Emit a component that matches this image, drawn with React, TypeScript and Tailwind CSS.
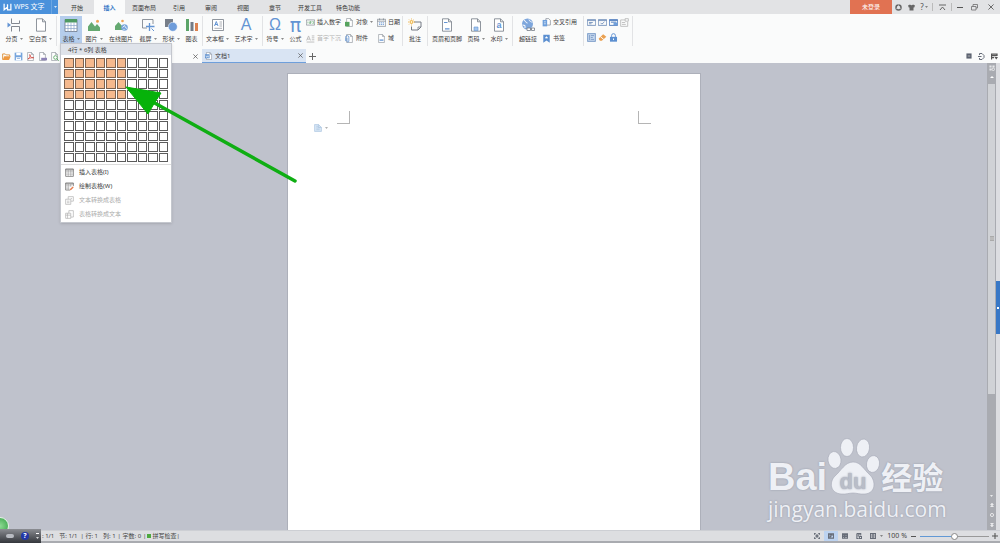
import { useState } from "react";
import type { ReactNode } from "react";
import clsx from "clsx";

const BLUE = "#6394d3";
const INK = "#747b85";

type IconProps = { children: ReactNode; className?: string };

function Glyph({ children, className = "size-[14px]" }: IconProps) {
  return (
    <svg viewBox="0 0 14 14" fill="none" aria-hidden className={clsx("shrink-0", className)}>
      {children}
    </svg>
  );
}

function Caret({ className = "text-[#666]" }: { className?: string }) {
  return (
    <svg viewBox="0 0 4 2" aria-hidden className={clsx("h-[2px] w-[3px] shrink-0", className)}>
      <path d="M0 0h4L2 2z" fill="currentColor" />
    </svg>
  );
}

const sheet = <path d="M2.500.8h6l3 3v9.400h-9zM8.500.8v3h3" fill="#fff" stroke={INK} strokeWidth=".8" />;

const icons = {
  pageBreak: (
    <>
      <path d="M4.500.5v5h8v-3M4.500 13.500v-5h8v5" stroke={INK} strokeWidth=".9" />
      <path d="M.5 4.500 4 7 .5 9.500z" fill={BLUE} />
    </>
  ),
  blank: sheet,
  table: (
    <>
      <path d="M1 1.500h12v12H1z" fill="#fff" stroke="#6b7688" strokeWidth=".8" />
      <path d="M1 1h12v3.500H1z" fill="#4f9a63" />
      <path d="M1 7.500h12M1 10.500h12M4 4.500v9M7 4.500v9M10 4.500v9" stroke="#8ba3c8" strokeWidth=".7" />
    </>
  ),
  picture: (
    <>
      <path d="M1 13V8.500L4.500 4 8 8.500 10 6l3 3.500V13z" fill="#64a970" />
      <circle cx="10.500" cy="3.300" r="1.500" fill="#eda455" />
    </>
  ),
  online: (
    <>
      <path d="M1 12V8l3.500-4L9 9v3z" fill="#64a970" />
      <circle cx="8.500" cy="3" r="1.300" fill="#eda455" />
      <circle cx="10.500" cy="9.500" r="3.300" fill="#7ba7dd" />
      <path d="m8.500 9.500 2-2 1 2 1.500 1M9.500 12l1-1" stroke="#fff" strokeWidth=".8" />
    </>
  ),
  capture: (
    <>
      <path d="M12 6V1.500H1.500v8.500H6" stroke={INK} strokeWidth=".8" />
      <path d="M8.500 5v8M5 8.500h8.500" stroke={BLUE} strokeWidth="1.300" />
      <path d="m10.500 10.500 2.500 2.500" stroke={BLUE} />
    </>
  ),
  shapes: (
    <>
      <path d="M1 1h8v8H1z" fill="#777e89" />
      <circle cx="8.800" cy="8.800" r="4.500" fill="#6e9cda" stroke="#fff" strokeWidth=".5" />
    </>
  ),
  chart: (
    <>
      <path d="M1 1h3v12H1z" fill="#5ba468" />
      <path d="M5.500 4h3v9h-3z" fill="#737b86" />
      <path d="M10 5h3v8h-3z" fill="#dc8250" />
    </>
  ),
  textBox: (
    <>
      <path d="M1.500 1.500h11v11h-11z" fill="#fff" stroke={INK} strokeWidth=".8" />
      <path d="m3.500 8 1.800-4.500L7 8M4 6.500h2.500" stroke={BLUE} />
      <path d="M8.500 4h2.500M8.500 6h2.500M8.500 8h2.500M3.500 10.300H11" stroke={INK} strokeWidth=".6" />
    </>
  ),
  comment: (
    <>
      <path d="M6 4h7v5l-3 3H3.500V8.500" stroke={INK} strokeWidth="1" />
      <path d="M13 9h-3v3" stroke={INK} strokeWidth=".8" />
      <circle cx="3.500" cy="4" r="1.500" stroke="#eeae3b" fill="#fff2c9" />
      <path d="M3.500.5v1M3.500 6.500v1M0 4h1M6 4h1M1 1.500l.8.8M6 1.500l-.8.8M1 6.500l.8-.8" stroke="#eeae3b" strokeWidth=".8" />
    </>
  ),
  header: (
    <>
      {sheet}
      <path d="M4 4.500h3.500M5 10.800h4.500" stroke={BLUE} strokeWidth="1.200" />
    </>
  ),
  pageNumber: (
    <>
      {sheet}
      <path d="M5 9h4v3.500H5z" fill="#a5c6ed" stroke={BLUE} strokeWidth=".6" />
    </>
  ),
  link: (
    <>
      <circle cx="6.500" cy="6" r="5.500" fill="#7da6dc" />
      <path d="M3 2.500c2.500 0 1 2.500 3.500 2.500M1.500 7l2.500.5v2.500M8 1.500c0 2 3 2 3 3" stroke="#fff" strokeWidth="1" />
      <path d="M6 10h3.500v2.500H6zM9.500 11.300h1M10.500 10h3v2.500h-3z" fill="#fff" stroke={INK} strokeWidth=".8" />
    </>
  ),
  number: (
    <>
      <path d="M.5 3h13v8H.5z" fill="#fff" stroke={INK} />
      <path d="M3 5.500v3M5.500 5.500H8v1.500H5.500v1.500H8M10 5.500h1.500v3H10" stroke="#5ba468" />
    </>
  ),
  dropCap: <path d="m1 10 3-7 3 7M2 8h4M9 3h4M9 6h4M9 9h4M1 12.500h12" stroke="#b4b4b4" strokeWidth="1.300" />,
  object: (
    <>
      {sheet}
      <path d="M0 6h7v7H0z" fill="#55a35e" />
    </>
  ),
  attach: (
    <>
      {sheet}
      <path d="M1 11V5a2.500 2.500 0 0 1 5 0v6a1.500 1.500 0 0 1-3 0V6" stroke={BLUE} strokeWidth="1.300" />
    </>
  ),
  date: (
    <>
      <path d="M.5 2h13v11H.5zM.5 5h13M4 .5v3M10 .5v3" stroke={INK} />
      <path d="M3 7.500h2M6 7.500h2M9 7.500h2M3 10h2M6 10h2M9 10h2" stroke={BLUE} strokeWidth="1.300" />
    </>
  ),
  field: (
    <>
      {sheet}
      <path d="M4 9.500h6" stroke={BLUE} strokeWidth="2" />
    </>
  ),
  crossRef: (
    <>
      <path d="M6 1h4.500L13 3.500V11H6z" fill="#fff" stroke={INK} />
      <path d="M1 3h7v10H1z" fill="#6e9fdb" />
      <path d="M3 6h3M3 9h3" stroke="#fff" />
    </>
  ),
  bookmark: (
    <>
      <path d="M2 1h10v12.500L7 10l-5 3.500z" fill="#5b8fd0" />
      <path d="m7 3 .8 1.500 1.700.2-1.200 1.200.3 1.600L7 6.800l-1.600.7.300-1.600-1.200-1.200 1.700-.2z" fill="#fff" />
    </>
  ),
  formText: <path d="M.5 2.500h13v9H.5zM.5 4h13M3 7h6M3 9h4" stroke="#6c8cb8" strokeWidth="1.300" />,
  formCheck: <path d="M.5 2.500h13v9H.5zM.5 4h13M4 7.500l2 2 4-3.500" stroke="#6c8cb8" strokeWidth="1.300" />,
  formList: (
    <>
      <path d="M.5 2.500h13v9H.5zM.5 4h13M3 6.500h8" stroke="#5480c0" strokeWidth="1.500" />
      <path d="M7 7h6v4H7z" fill="#6e9fdb" />
    </>
  ),
  formProps: <path d="M8 3H1v10h11V6M8 1h5v4H8zM3 7h5M3 10h6" stroke="#b4b4b4" strokeWidth="1.200" />,
  shading: <path d="M1 1h12v12H1zM4 3v8M6 4h5M6 7h3M6 10h5" stroke="#7193bf" strokeWidth="1.200" />,
  eraser: (
    <>
      <path d="m1 9 7-7 5 4-7 6H3z" fill="#eaa050" />
      <path d="m4 6 5 4" stroke="#fff" strokeWidth="1.500" />
    </>
  ),
  lock: (
    <>
      <path d="M4 6V4a3 3 0 0 1 6 0v2" stroke={BLUE} strokeWidth="1.500" />
      <path d="M1.500 6h11v7.500h-11z" fill="#5b8fd0" />
      <path d="M7 8.500v2.500" stroke="#fff" strokeWidth="1.500" />
    </>
  ),
  open: (
    <>
      <path d="M1 12V3h4l1.500 1.500H12V7" stroke="#d98527" strokeWidth="1.300" />
      <path d="M3.500 6.500h10L11 12.500H1z" fill="#ee9940" />
    </>
  ),
  save: (
    <>
      <path d="M1 1h12v12H1z" fill="#76a5dd" />
      <path d="M3.500 1h7v4h-7zM3 8h8v5H3z" fill="#fff" />
      <path d="M4.500 10h5" stroke={BLUE} />
    </>
  ),
  pdf: (
    <>
      {sheet}
      <path d="M3 11c4-3 4-7 3-7s1 5 5 5-4-1-8 2z" stroke="#cf4138" strokeWidth="1.200" />
    </>
  ),
  print: (
    <>
      {sheet}
      <path d="M5 9h9v4H5z" fill="#8c82b5" />
    </>
  ),
  preview: (
    <>
      {sheet}
      <circle cx="8.500" cy="8.500" r="2.800" fill="#fff" stroke="#55a35e" strokeWidth="1.300" />
      <path d="m10.500 10.500 3 3" stroke="#55a35e" strokeWidth="1.500" />
    </>
  ),
  wordDoc: (
    <>
      {sheet}
      <path d="M0 4h8v7H0z" fill="#5b8fd0" />
      <path d="m1.500 6 1 3.500L4 6.500l1.500 3 1-3.500" stroke="#fff" />
    </>
  ),
  insertTable: (
    <>
      <path d="M1 1.500h12v11.500H1zM1 3h12" stroke="#555" />
      <path d="M1 6h12M1 9.500h12M5 3v10M9 3v10" stroke="#888" strokeWidth=".8" />
    </>
  ),
  drawTable: (
    <>
      <path d="M8 12.500H1v-11h12v5M1 3h12" stroke="#555" />
      <path d="M1 6h9M1 9.500h6M5 3v9.500M9 3v4" stroke="#888" strokeWidth=".8" />
      <path d="m7.500 13 .7-2.500L12 7l1.500 1.500-4 3.800z" fill="#e47c4e" />
    </>
  ),
  toTable: <path d="M5 1h8v7H9M5 1v4M1 5h8v8H1zM3 8h4M3 10.500h4M9 4h2" stroke="#aaa" />,
  toText: <path d="M6 1h7v10H9M6 1v4M1 5h8v8H1zM1 8h8M4 5v8" stroke="#aaa" />,
};

type IconName = keyof typeof icons;

function Icon({ name, className }: { name: IconName; className?: string }) {
  return <Glyph className={className}>{icons[name]}</Glyph>;
}

type BigButtonProps = {
  label: string;
  icon: ReactNode;
  width: string;
  caret?: boolean;
  active?: boolean;
};

function BigButton({ label, icon, width, caret, active }: BigButtonProps) {
  return (
    <button
      type="button"
      className={clsx("flex h-[27px] shrink-0 flex-col items-center gap-[3px] pt-[2px]", width, active && "bg-[#b5cdec]")}
    >
      <span className="flex h-[14px] items-center justify-center">{icon}</span>
      <span className="flex items-center gap-[2px] leading-[8px] whitespace-nowrap">
        {label}
        {caret && <Caret />}
      </span>
    </button>
  );
}

function SmallButton({ label, icon, caret, disabled }: { label: string; icon: IconName; caret?: boolean; disabled?: boolean }) {
  return (
    <button type="button" disabled={disabled} className="flex h-2 items-center gap-[2px] whitespace-nowrap disabled:text-[#b4b4b4]">
      <Icon name={icon} className="size-[9px]" />
      {label}
      {caret && <Caret />}
    </button>
  );
}

function Stack({ children }: { children: ReactNode }) {
  return <div className="flex h-[27px] flex-col justify-between pt-[2px] pb-px">{children}</div>;
}

function Divider() {
  return <div className="mx-px h-[30px] w-px shrink-0 bg-[#e2e3e5]" />;
}

const menuTabs = [
  { label: "开始", width: "w-[34px]" },
  { label: "插入", width: "w-[31px]", active: true },
  { label: "页面布局", width: "w-[38px]" },
  { label: "引用", width: "w-8" },
  { label: "审阅", width: "w-8" },
  { label: "视图", width: "w-8" },
  { label: "章节", width: "w-8" },
  { label: "开发工具", width: "w-[38px]" },
  { label: "特色功能", width: "w-[38px]" },
];

function TitleBar() {
  return (
    <header className="flex h-[14px] shrink-0 bg-[#e2e3e5]">
      <button type="button" className="mr-[2px] flex w-[58px] items-center bg-[#4a91db] pl-[3px] text-[7px] text-white">
        <svg viewBox="0 0 16 14" fill="none" aria-hidden className="mr-[2px] h-2 w-[9px]">
          <path d="M2 1v11l6-5v5h6V1M8 2v5" stroke="#fff" strokeWidth="2.200" />
        </svg>
        <span className="whitespace-nowrap">WPS 文字</span>
        <span className="ml-auto flex h-full w-[7px] items-center justify-center border-l border-[#6ba6e2]">
          <Caret className="text-white" />
        </span>
      </button>
      <nav className="flex">
        {menuTabs.map((tab) => (
          <button
            key={tab.label}
            type="button"
            className={clsx("pt-[2px] leading-[12px] whitespace-nowrap", tab.width, tab.active && "bg-[#fafbfb] font-bold text-[#3b7cc8]")}
          >
            {tab.label}
          </button>
        ))}
      </nav>
      <div className="ml-auto flex items-center text-[#555]">
        <button type="button" className="h-full w-[42px] bg-[#e17252] text-white">未登录</button>
        <button type="button" aria-label="皮肤中心" className="flex w-[13px] justify-center">
          <Glyph className="size-[7px]">
            <circle cx="7" cy="7" r="5" stroke="#666" strokeWidth="3" />
            <path d="M7 7V1M7 7l5 3M7 7l-5 3" stroke="#e2e3e5" />
          </Glyph>
        </button>
        <button type="button" aria-label="换肤" className="flex w-[12px] justify-center">
          <Glyph className="size-[7px]">
            <path d="m0 3 4-2c1 2 5 2 6 0l4 2-1.500 4H11v6H3V7H1.500z" fill="#666" />
          </Glyph>
        </button>
        <button type="button" aria-label="帮助" className="flex w-[14px] items-center justify-center gap-px text-[8px]">
          ?<Caret />
        </button>
        <span className="mx-px h-2 w-px bg-[#bbb]" />
        <button type="button" aria-label="收起功能区" className="flex w-[16px] justify-center">
          <Glyph className="size-[7px]">
            <path d="M0 2h14M2 12l5-6 5 6" stroke="#666" strokeWidth="2" />
          </Glyph>
        </button>
        <span className="mx-px h-2 w-px bg-[#bbb]" />
        <button type="button" aria-label="最小化" className="flex w-[14px] justify-center">
          <span className="h-px w-[6px] bg-[#555]" />
        </button>
        <button type="button" aria-label="还原" className="flex w-[14px] justify-center">
          <Glyph className="size-[7px]">
            <path d="M4 5V1h9v7h-3M1 5h9v7H1z" stroke="#666" strokeWidth="1.500" />
          </Glyph>
        </button>
        <button type="button" aria-label="关闭" className="flex w-[19px] justify-center">
          <Glyph className="size-[6px]">
            <path d="m1 1 12 12M13 1 1 13" stroke="#555" strokeWidth="2" />
          </Glyph>
        </button>
      </div>
    </header>
  );
}

const tableActions: { label: string; icon: IconName; disabled?: boolean }[] = [
  { label: "插入表格(I)", icon: "insertTable" },
  { label: "绘制表格(W)", icon: "drawTable" },
  { label: "文本转换成表格", icon: "toTable", disabled: true },
  { label: "表格转换成文本", icon: "toText", disabled: true },
];

function TableMenu() {
  const [size, setSize] = useState({ rows: 4, cols: 6 });

  return (
    <div className="absolute top-[27px] left-0 z-20 w-[112px] border border-[#c4c7ce] bg-white pb-px shadow-sm">
      <p className="h-[11px] bg-[#dfe3ea] pl-[7px] leading-[12px]">
        {size.rows}行 * {size.cols}列 表格
      </p>
      <div className="mx-[3px] mt-[3px] mb-[2px] grid h-[104px] grid-cols-10 gap-px">
        {Array.from({ length: 100 }, (_, i) => {
          const row = Math.floor(i / 10) + 1;
          const col = (i % 10) + 1;
          const picked = row <= size.rows && col <= size.cols;
          return (
            <button
              key={i}
              type="button"
              aria-label={`${row} × ${col}`}
              onMouseEnter={() => setSize({ rows: row, cols: col })}
              className={clsx("border", picked ? "border-[#7c6250] bg-[#f5b98e]" : "border-[#5c5c5c] bg-white")}
            />
          );
        })}
      </div>
      <div className="border-t border-[#dcdcdc]">
        {tableActions.map((action) => (
          <button
            key={action.label}
            type="button"
            disabled={action.disabled}
            className="flex h-[14px] w-full items-center gap-[5px] pl-1 disabled:text-[#aaa]"
          >
            <Icon name={action.icon} className="size-[9px]" />
            {action.label}
          </button>
        ))}
      </div>
    </div>
  );
}

const formTools: { icon: IconName; label: string; active?: boolean }[] = [
  { icon: "formText", label: "文字型窗体域" },
  { icon: "formCheck", label: "复选框型窗体域" },
  { icon: "formList", label: "下拉型窗体域" },
  { icon: "formProps", label: "窗体域选项" },
  { icon: "shading", label: "窗体域底纹", active: true },
  { icon: "eraser", label: "重新设置窗体域" },
  { icon: "lock", label: "保护窗体" },
];

function Ribbon() {
  return (
    <div className="flex h-[35px] shrink-0 items-start bg-[#fafbfb] pt-[2px] pl-[2px]">
      <BigButton label="分页" caret width="w-6" icon={<Icon name="pageBreak" />} />
      <BigButton label="空白页" caret width="w-[29px]" icon={<Icon name="blank" />} />
      <Divider />
      <div className="relative ml-[2px]">
        <BigButton label="表格" caret active width="w-[22px]" icon={<Icon name="table" />} />
        <TableMenu />
      </div>
      <BigButton label="图片" caret width="w-6" icon={<Icon name="picture" />} />
      <BigButton label="在线图片" width="w-[30px]" icon={<Icon name="online" />} />
      <BigButton label="截屏" caret width="w-6" icon={<Icon name="capture" />} />
      <BigButton label="形状" caret width="w-[22px]" icon={<Icon name="shapes" />} />
      <BigButton label="图表" width="w-[19px]" icon={<Icon name="chart" />} />
      <Divider />
      <BigButton label="文本框" caret width="w-[27px]" icon={<Icon name="textBox" />} />
      <BigButton
        label="艺术字"
        caret
        width="w-[30px]"
        icon={<span className="font-['Liberation_Sans'] text-[16px] leading-[14px] text-[#6394d3]">A</span>}
      />
      <Divider />
      <BigButton
        label="符号"
        caret
        width="w-[22px]"
        icon={<span className="font-['Liberation_Sans'] text-[16px] leading-[14px] text-[#6394d3]">Ω</span>}
      />
      <BigButton
        label="公式"
        width="w-[19px]"
        icon={<span className="font-['DejaVu_Sans'] text-[19px] leading-[14px] text-[#6394d3]">π</span>}
      />
      <div className="flex gap-1 pl-px">
        <Stack>
          <SmallButton label="插入数字" icon="number" />
          <SmallButton label="首字下沉" icon="dropCap" disabled />
        </Stack>
        <Stack>
          <SmallButton label="对象" icon="object" caret />
          <SmallButton label="附件" icon="attach" />
        </Stack>
        <Stack>
          <SmallButton label="日期" icon="date" />
          <SmallButton label="域" icon="field" />
        </Stack>
      </div>
      <div className="w-px" />
      <Divider />
      <BigButton label="批注" width="w-[22px]" icon={<Icon name="comment" />} />
      <Divider />
      <BigButton label="页眉和页脚" width="w-[36px]" icon={<Icon name="header" />} />
      <BigButton label="页码" caret width="w-[22px]" icon={<Icon name="pageNumber" />} />
      <BigButton
        label="水印"
        caret
        width="w-6"
        icon={
          <span className="relative flex">
            <Icon name="blank" />
            <span className="absolute inset-0 text-center font-['Liberation_Sans'] text-[9px] leading-[15px] font-bold text-[#6394d3]">a</span>
          </span>
        }
      />
      <Divider />
      <BigButton label="超链接" width="w-7" icon={<Icon name="link" />} />
      <Stack>
        <SmallButton label="交叉引用" icon="crossRef" />
        <SmallButton label="书签" icon="bookmark" />
      </Stack>
      <div className="w-[5px]" />
      <Divider />
      <div className="grid h-[27px] grid-cols-4 content-between gap-x-[2px] px-[2px] pt-[2px] pb-px">
        {formTools.map((tool) => (
          <button key={tool.icon} type="button" aria-label={tool.label} className={clsx(tool.active && "bg-[#c5d7ef]")}>
            <Icon name={tool.icon} className="size-[9px]" />
          </button>
        ))}
      </div>
      <Divider />
    </div>
  );
}

const quickTools: { icon: IconName; label: string }[] = [
  { icon: "open", label: "打开" },
  { icon: "save", label: "保存" },
  { icon: "pdf", label: "输出为PDF" },
  { icon: "print", label: "打印" },
  { icon: "preview", label: "打印预览" },
];

function CloseMark() {
  return (
    <Glyph className="size-[5px]">
      <path d="m1 1 12 12M13 1 1 13" stroke="#555" strokeWidth="2" />
    </Glyph>
  );
}

function DocumentTabs() {
  return (
    <div className="flex h-[14px] shrink-0 items-center bg-[#fafbfb]">
      <div className="flex w-[60px] gap-[3px] pl-[2px]">
        {quickTools.map((tool) => (
          <button key={tool.icon} type="button" aria-label={tool.label}>
            <Icon name={tool.icon} className="size-[9px]" />
          </button>
        ))}
      </div>
      <div className="flex w-[142px] justify-end pr-1">
        <button type="button" aria-label="关闭标签">
          <CloseMark />
        </button>
      </div>
      <div className="flex h-full w-[104px] items-center gap-[2px] border-b border-[#6e9fdb] bg-[#d9e4f3] px-[3px]">
        <Icon name="wordDoc" className="size-[8px]" />
        文档1
        <button type="button" aria-label="关闭文档1" className="ml-auto">
          <CloseMark />
        </button>
      </div>
      <button type="button" aria-label="新建标签" className="ml-[3px]">
        <Glyph className="size-[7px]">
          <path d="M7 0v14M0 7h14" stroke="#666" strokeWidth="2" />
        </Glyph>
      </button>
      <div className="ml-auto flex gap-[6px] pr-[2px]">
        <button type="button" aria-label="任务窗格">
          <Glyph className="size-[6px]">
            <path d="M1 1h12v12H1z" fill="#5b6270" />
            <path d="M4 7h6" stroke="#bbb" strokeWidth="2" />
          </Glyph>
        </button>
        <button type="button" aria-label="文档漫游">
          <Glyph className="size-[7px]">
            <path d="M3 4V1h5l4 4v4l-4 4H3v-3M0 7h7" stroke="#666c78" strokeWidth="2" />
          </Glyph>
        </button>
        <button type="button" aria-label="标签列表">
          <Glyph className="size-[7px]">
            <path d="M1 13V2h11v4M1 5h10M1 9h5" stroke="#555" strokeWidth="2.500" />
            <path d="M7 8h7l-3.500 5z" fill="#555" />
          </Glyph>
        </button>
      </div>
    </div>
  );
}

function PasteHint() {
  return (
    <div className="flex items-center gap-[3px] pl-[26px]">
      <Glyph className="size-[8px]">
        <path d="M1 1h7l5 5v7H1z" fill="#d8e6f5" stroke="#9fbcdb" />
        <path d="M4 4h3M4 7h6M4 10h6M8 1v5h5" stroke="#9fbcdb" />
      </Glyph>
      <Caret className="text-[#999]" />
    </div>
  );
}

function ScrollBar() {
  return (
    <div className="flex w-[13px] shrink-0 border-r-4 border-[#dcdde1] bg-[#a9abb1]">
      <div className="flex w-[9px] flex-col items-center">
        <Glyph className="mt-[2px] size-[6px]">
          <path d="M1 1h5v5H1zM8 1h5v5H8zM1 8h5v5H1z" fill="#e6e7e9" />
          <circle cx="10" cy="10" r="3" stroke="#fff" strokeWidth="1.500" />
        </Glyph>
        <svg viewBox="0 0 4 2" aria-hidden className="mt-[5px] mb-[6px] h-[2px] w-[4px]">
          <path d="M0 2h4L2 0z" fill="#fff" />
        </svg>
        <div className="flex w-[7px] grow-[3] flex-col items-center justify-center bg-[#d0d2d6]">
          <span className="h-[5px] w-[4px] border-y border-[#aaa] bg-[#bbb]" />
        </div>
        <div className="grow" />
        <div className="flex flex-col items-center gap-[6px] pb-[3px]">
          <Caret className="text-white" />
          <Glyph className="size-[4px]">
            <path d="M0 6 7 0l7 6zM0 13l7-6 7 6z" fill="#fff" />
          </Glyph>
          <Glyph className="size-[4px]">
            <circle cx="7" cy="7" r="5.500" stroke="#fff" strokeWidth="2.500" />
          </Glyph>
          <Glyph className="size-[4px]">
            <path d="M0 1h14L7 7zM0 8h14l-7 6z" fill="#fff" />
          </Glyph>
        </div>
      </div>
    </div>
  );
}

function Watermark() {
  return (
    <div className="absolute right-[54px] bottom-[7px] w-[178px] text-[#eef0f5] [text-shadow:0_0_2px_#8f94a3]">
      <div className="flex h-[56px] items-end">
        <span className="font-['Liberation_Sans'] text-[38px] leading-[36px] font-bold">Bai</span>
        <svg viewBox="0 0 53 57" className="h-[57px] w-[53px] shrink-0 overflow-visible" aria-hidden>
          <g fill="#eef0f5" stroke="#a4a8b5" strokeWidth=".6">
            <ellipse cx="7.500" cy="22" rx="6.500" ry="8.500" transform="rotate(-8 7.500 22)" />
            <ellipse cx="20" cy="9.500" rx="6.500" ry="9" />
            <ellipse cx="36" cy="10" rx="6.500" ry="9" transform="rotate(8 36 10)" />
            <ellipse cx="46" cy="26" rx="6.500" ry="8.500" transform="rotate(10 46 26)" />
            <path d="M26 24c8 0 11 8 17 13 6 6 6 18-5 19-5 .5-8-1-12-1s-7 1.500-12 1C3 55 2 44 8 38c6-5 10-14 18-14z" />
          </g>
          <text x="26" y="51" textAnchor="middle" fill="#b9bdc8" className="font-['Liberation_Sans'] text-[22px] font-bold">
            du
          </text>
        </svg>
        <span className="pl-px text-[31px] leading-[36px] font-bold whitespace-nowrap">经验</span>
      </div>
      <p className="font-['Open_Sans'] text-[21px] leading-[28px]">jingyan.baidu.com</p>
    </div>
  );
}

function Workspace() {
  return (
    <main className="relative flex min-h-0 flex-1 bg-[#bfc2cc]">
      <div className="flex-1 pt-[10px]">
        <article className="mx-auto h-full w-[414px] border-x border-t border-[#adb0ba] bg-white pt-[37px]">
          <div className="flex justify-between px-[49px]">
            <span className="size-[13px] border-r border-b border-[#b5b5b5]" />
            <span className="size-[13px] border-b border-l border-[#b5b5b5]" />
          </div>
          <PasteHint />
        </article>
      </div>
      <ScrollBar />
      <Watermark />
      <button
        type="button"
        aria-label="展开侧栏"
        className="absolute top-[218px] right-0 flex h-[53px] w-[4px] items-center justify-center bg-[#3978c6]"
      >
        <span className="h-[2px] w-[2px] bg-white" />
      </button>
    </main>
  );
}

const views = [
  { label: "全屏显示", d: "M1 4V1h3M10 1h3v3M13 10v3h-3M4 13H1v-3M5 5h4v4H5z" },
  { label: "页面视图", d: "M1 2h12v10H1zM3 5h8M3 8h5M3 10h3", active: true },
  { label: "大纲视图", d: "M1 2h12v10H1zM1 5h12M1 8h12M6 5v7" },
  { label: "Web版式", d: "M2 1h9v5M2 1v12h4M4 4h5M4 7h3M8 8h5v5H8z" },
  { label: "护眼模式", d: "M1 1h12v12H1zM5 4h4v6H5z" },
];

function StatusBar() {
  return (
    <footer className="flex h-[13px] shrink-0 items-center border-t border-b-2 border-[#cdcfd4] border-b-[#a9abb0] bg-[#dddee1] text-[#444]">
      <div className="flex items-center gap-[5px] pl-[42px] whitespace-nowrap">
        <span>: 1/1</span>
        <span>节: 1/1</span>
        <span className="-ml-[2px]">| 行: 1</span>
        <span>列: 1</span>
        <span className="-ml-[3px]">| 字数: 0</span>
        <button type="button" className="-ml-[3px] flex items-center gap-px">
          |<span className="size-[4px] bg-[#4da83e]" />
          拼写检查|
        </button>
      </div>
      <div className="ml-auto flex items-center pr-[2px]">
        {views.map((view) => (
          <button
            key={view.label}
            type="button"
            aria-label={view.label}
            className={clsx("flex h-[10px] w-[14px] items-center justify-center", view.active && "bg-[#bdd3f0]")}
          >
            <Glyph className="size-[6px]">
              <path d={view.d} stroke="#666c77" strokeWidth="2.500" />
            </Glyph>
          </button>
        ))}
        <Caret />
        <span className="mx-[4px] text-[7px] whitespace-nowrap">100 %</span>
        <button type="button" aria-label="缩小" className="mr-1 h-px w-[5px] bg-[#555]" />
        <input
          type="range"
          aria-label="显示比例"
          min={0}
          max={100}
          defaultValue={50}
          className="h-px w-[69px] appearance-none bg-linear-to-r from-[#6299d5] from-50% to-[#999] to-50% [&::-webkit-slider-thumb]:size-[7px] [&::-webkit-slider-thumb]:appearance-none [&::-webkit-slider-thumb]:rounded-full [&::-webkit-slider-thumb]:border [&::-webkit-slider-thumb]:border-[#888] [&::-webkit-slider-thumb]:bg-white"
        />
        <button type="button" aria-label="放大" className="ml-[3px]">
          <Glyph className="size-[6px]">
            <path d="M7 0v14M0 7h14" stroke="#555" strokeWidth="2.500" />
          </Glyph>
        </button>
      </div>
    </footer>
  );
}

function InputMethodBar() {
  return (
    <>
      <div className="absolute bottom-[8px] -left-[9px] z-20 size-[18px] rounded-full border border-[#e4f5e5] bg-radial from-[#8edb94] to-[#2ca044]" />
      <div className="absolute bottom-0 left-0 z-30 flex h-[14px] w-[41px] items-center justify-end gap-[7px] bg-linear-to-b from-[#8b8d92] to-[#34373c] pr-[2px]">
        <span className="h-[4px] w-[8px] rounded-sm bg-[#b9bcc2]" />
        <span className="flex size-2 items-center justify-center rounded-full bg-[#2338a8] text-[7px] font-bold text-white">?</span>
        <span className="flex flex-col gap-[3px]">
          <span className="h-px w-[3px] bg-white" />
          <Caret className="text-white" />
        </span>
      </div>
    </>
  );
}

function PointerArrow() {
  return (
    <svg viewBox="0 0 172 97" aria-hidden className="pointer-events-none absolute top-[86px] left-[125px] z-30 h-[97px] w-[172px]">
      <path d="m26 15 144 80" stroke="#0fae13" strokeWidth="3.500" strokeLinecap="round" />
      <path d="m1 1 35 6-6 9-7 12z" fill="#06b20a" stroke="#06b20a" />
    </svg>
  );
}

export default function App() {
  return (
    <div className="relative flex h-screen flex-col overflow-hidden bg-[#bfc2cc] font-['Noto_Sans','Noto_Sans_CJK_SC',sans-serif] text-[6px] leading-[8px] text-[#3a3a3a]">
      <TitleBar />
      <Ribbon />
      <DocumentTabs />
      <Workspace />
      <StatusBar />
      <InputMethodBar />
      <PointerArrow />
    </div>
  );
}
